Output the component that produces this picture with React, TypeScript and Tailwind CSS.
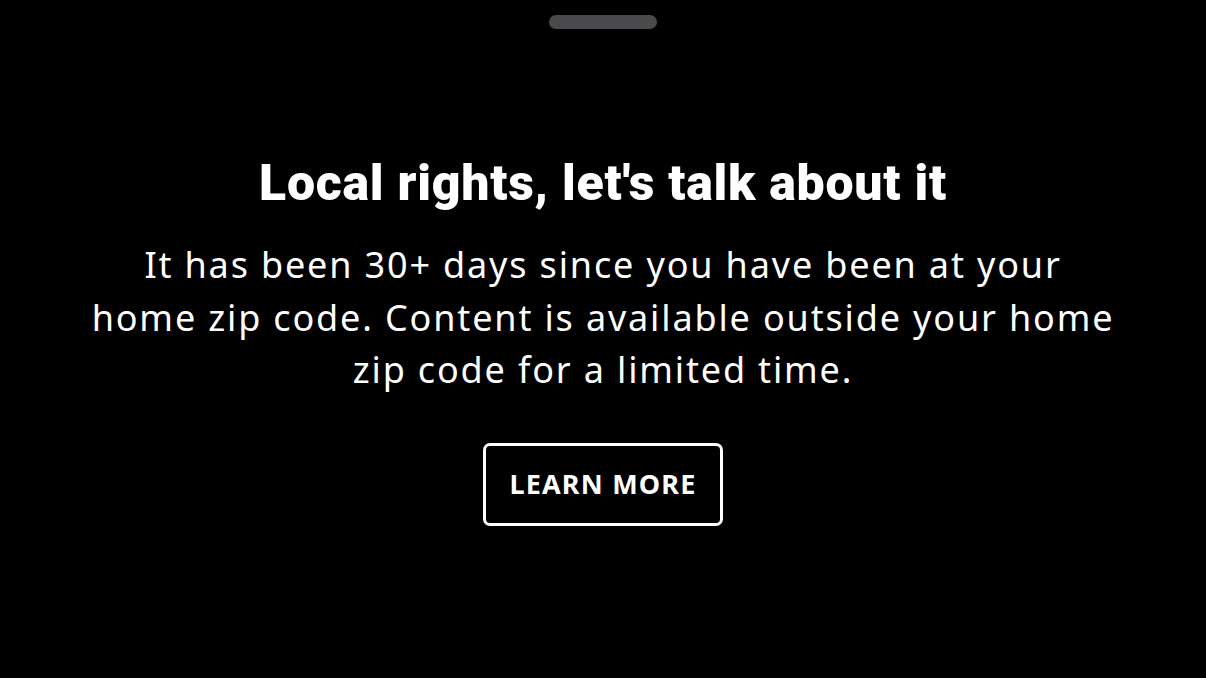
export default function App() {
  return (
    <div className="flex h-[678px] w-full flex-col items-center bg-black text-white">
      <div className="mt-[15px] h-[14px] w-[108px] rounded-full bg-[#4a4a4c]" />

      <h1 className="mt-[126px] font-['Roboto',sans-serif] text-[50px] font-black leading-[56px] tracking-[0.75px]">
        Local rights, let's talk about it
      </h1>

      <p className="mt-[28px] whitespace-nowrap text-center font-['Noto_Sans',sans-serif] text-[36px] leading-[52.5px] tracking-[1.85px]">
        It has been 30+ days since you have been at your
        <br />
        home zip code. Content is available outside your home
        <br />
        zip code for a limited time.
      </p>

      <button
        type="button"
        className="mt-[46px] flex h-[83px] w-[240px] items-center justify-center rounded-[7px] border-[3px] border-white font-['Noto_Sans',sans-serif] text-[27px] font-bold tracking-[1.2px]"
      >
        LEARN MORE
      </button>
    </div>
  );
}
